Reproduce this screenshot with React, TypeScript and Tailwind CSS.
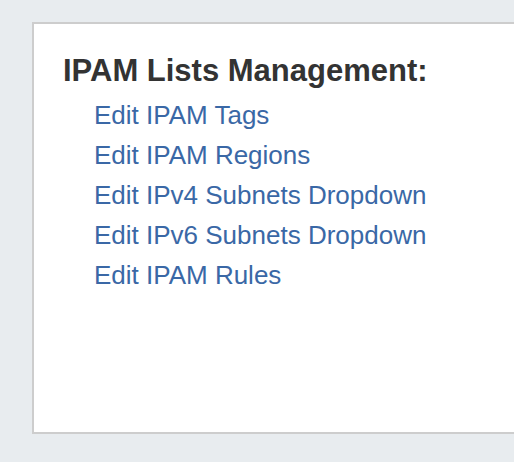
const links = [
  "Edit IPAM Tags",
  "Edit IPAM Regions",
  "Edit IPv4 Subnets Dropdown",
  "Edit IPv6 Subnets Dropdown",
  "Edit IPAM Rules",
];

export default function App() {
  return (
    <div
      className="h-[462px] w-[514px] overflow-hidden bg-[#e8ecef] pl-[32px] pt-[22px]"
      style={{ fontFamily: '"Liberation Sans", Arial, sans-serif' }}
    >
      <div className="h-[412px] border-2 border-r-0 border-[#cdcdcd] bg-white pl-[29px] pt-[29px]">
        <h3 className="text-[31px] font-bold leading-[36px] text-[#333333]">
          IPAM Lists Management:
        </h3>
        <ul className="mt-[6px] pl-[31px]">
          {links.map((l) => (
            <li key={l} className="text-[26px] leading-[40px]">
              <a href="#" className="text-[#3a68a6]">
                {l}
              </a>
            </li>
          ))}
        </ul>
      </div>
    </div>
  );
}
